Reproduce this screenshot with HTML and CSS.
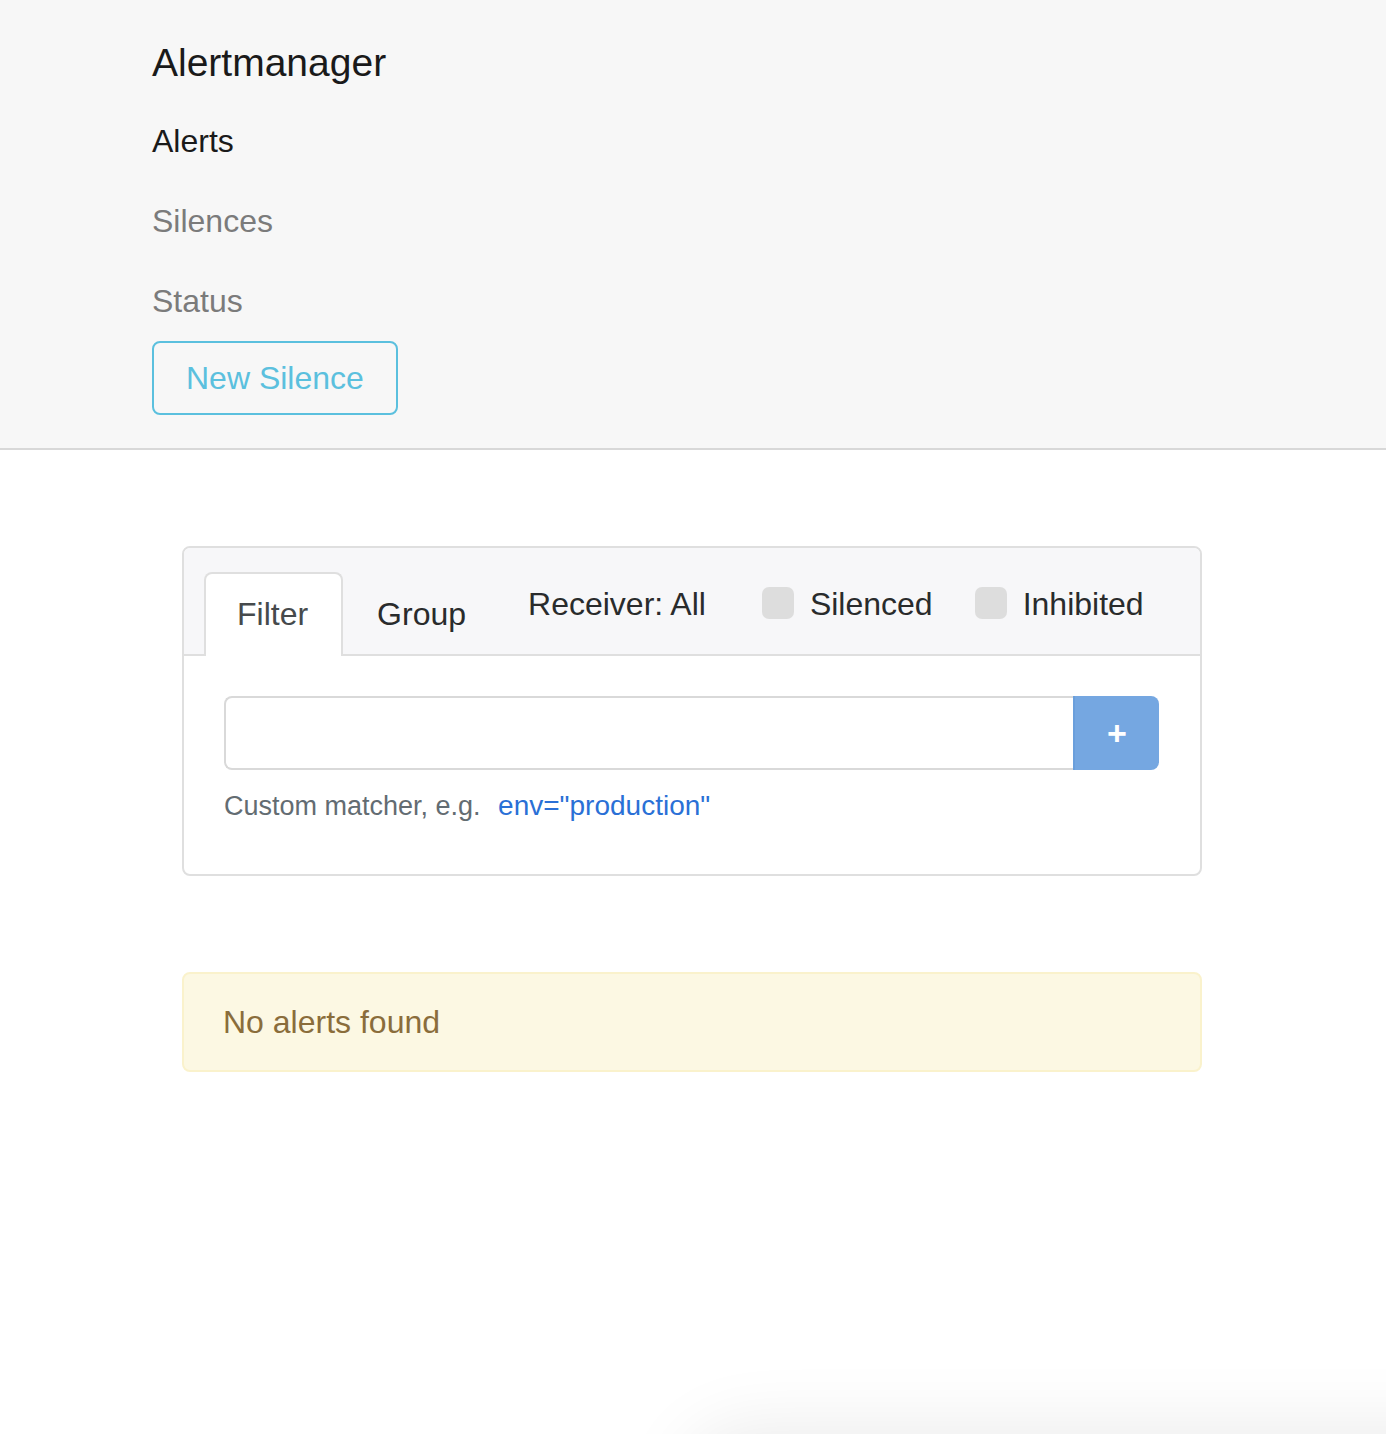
FILE: index.html
```html
<!DOCTYPE html>
<html>
<head>
<meta charset="utf-8">
<title>Alertmanager</title>
<link rel="stylesheet" href="styles.css">
</head>
<body>
<header class="navbar">
  <div class="brand">Alertmanager</div>
  <ul class="nav">
    <li class="nav-item active">Alerts</li>
    <li class="nav-item">Silences</li>
    <li class="nav-item">Status</li>
  </ul>
  <a class="btn-outline">New Silence</a>
</header>
<main class="main">
  <section class="card">
    <div class="card-header">
      <div class="tab active">Filter</div>
      <div class="tab">Group</div>
      <div class="receiver">Receiver: All</div>
      <label class="check"><span class="box"></span>Silenced</label>
      <label class="check check-last"><span class="box"></span>Inhibited</label>
    </div>
    <div class="card-body">
      <div class="input-group">
        <div class="input"></div>
        <div class="add-btn">+</div>
      </div>
      <div class="help">Custom matcher, e.g. <span class="example">env="production"</span></div>
    </div>
  </section>
  <div class="alert">No alerts found</div>
</main>
<div class="edge-shadow"></div>
</body>
</html>
```
FILE: styles.css
```css
html, body {
  margin: 0;
  padding: 0;
}
body {
  font-family: "Liberation Sans", Arial, sans-serif;
  color: #292b2c;
  background: #fff;
  width: 1386px;
  height: 1434px;
  overflow: hidden;
  position: relative;
}
.navbar {
  background: #f7f7f7;
  border-bottom: 2px solid #d8d8d8;
  padding: 33px 0 33px 152px;
}
.brand {
  font-size: 39px;
  line-height: 60px;
  color: #1a1a1a;
  margin-bottom: 8px;
}
.nav {
  list-style: none;
  margin: 0;
  padding: 0;
}
.nav-item {
  font-size: 32px;
  line-height: 48px;
  padding: 16px 0;
  color: #7b7b7b;
}
.nav-item.active {
  color: #1a1a1a;
}
.btn-outline {
  display: inline-block;
  font-size: 32px;
  line-height: 48px;
  padding: 11px 32px;
  border: 2px solid #5bc0de;
  border-radius: 8px;
  color: #5bc0de;
}
.main {
  padding: 96px 0 0 182px;
}
.card {
  width: 1020px;
  box-sizing: border-box;
  border: 2px solid #dfdfdf;
  border-radius: 8px;
}
.card-header {
  background: #f7f7f9;
  border-bottom: 2px solid #dfdfdf;
  border-radius: 6px 6px 0 0;
  padding: 24px 0 0 20px;
  display: flex;
  align-items: flex-start;
  height: 82px;
}
.tab {
  font-size: 32px;
  line-height: 48px;
  padding: 16px 32px;
  border: 2px solid transparent;
  border-bottom: none;
  border-radius: 8px 8px 0 0;
  color: #292b2c;
}
.tab.active {
  background: #fff;
  border-color: #dfdfdf;
  color: #464a4c;
  height: 50px;
  padding: 16px 33px 16px 31px;
}
.receiver, .check {
  font-size: 32px;
  line-height: 48px;
  margin-top: 8px;
  color: #292b2c;
}
.receiver {
  margin-left: 28px;
}
.check {
  display: flex;
  align-items: center;
  margin-left: 56px;
}
.check-last {
  margin-left: 42px;
}
.box {
  width: 32px;
  height: 32px;
  border-radius: 7px;
  background: #dddddd;
  margin-right: 16px;
  margin-top: -2px;
}
.card-body {
  padding: 40px 41px 48px 40px;
}
.input-group {
  display: flex;
  height: 74px;
}
.input {
  flex: 1;
  border: 2px solid #d9d9d9;
  border-right: none;
  border-radius: 8px 0 0 8px;
}
.add-btn {
  width: 86px;
  background: #75a7e1;
  border-left: 2px solid #6a9fdc;
  box-sizing: border-box;
  border-radius: 0 8px 8px 0;
  color: #fff;
  font-size: 34px;
  font-weight: bold;
  display: flex;
  align-items: center;
  justify-content: center;
}
.help {
  margin-top: 16px;
  font-size: 27px;
  line-height: 40px;
  color: #636c72;
}
.example {
  color: #2a70d6;
  margin-left: 10px;
  font-size: 28px;
}
.alert {
  width: 1020px;
  box-sizing: border-box;
  margin-top: 96px;
  background: #fcf8e3;
  border: 2px solid #faf2cc;
  border-radius: 8px;
  padding: 24px 39px;
  font-size: 32px;
  line-height: 48px;
  color: #8a6d3b;
}
.edge-shadow {
  position: absolute;
  left: 700px;
  top: 1446px;
  width: 900px;
  height: 100px;
  border-radius: 60px;
  box-shadow: 0 0 70px 20px rgba(0, 0, 0, 0.08);
}
```
